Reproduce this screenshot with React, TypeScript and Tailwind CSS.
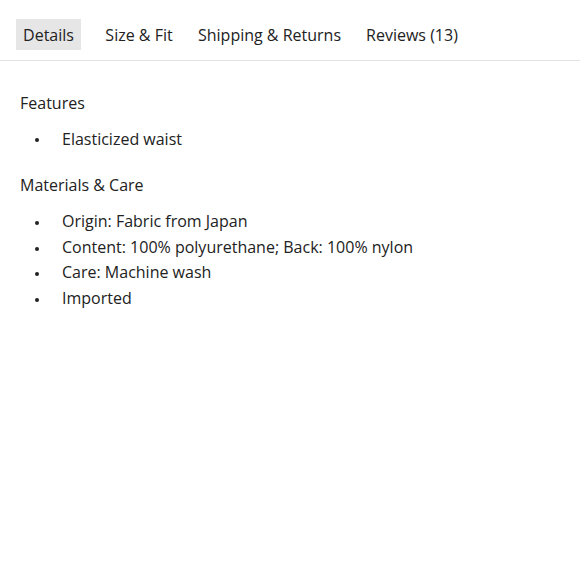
import React from "react";

const tabs = [
  { t: "Details", c: "w-[65px] bg-[#e6e6e6]" },
  { t: "Size & Fit", c: "w-[82px] ml-[6px]" },
  { t: "Shipping & Returns", c: "w-[157px]" },
  { t: "Reviews (13)", c: "w-[106px]" },
];

function Item({ children }: { children: React.ReactNode }) {
  return (
    <li className="flex items-center">
      <span className="w-[42px] flex pl-[15px]">
        <span className="block w-[4px] h-[4px] rounded-full bg-[#222] mt-[2px]" />
      </span>
      <span>{children}</span>
    </li>
  );
}

export default function App() {
  return (
    <div
      className="w-[580px] h-[580px] bg-white text-[#222]"
      style={{ fontFamily: "'Open Sans', 'Liberation Sans', sans-serif" }}
    >
      <div className="flex items-center gap-[11px] px-4 pt-[19px] pb-[10px] border-b border-[#e3e3e3]">
        {tabs.map(({ t, c }) => (
          <div
            key={t}
            className={`h-[31px] flex items-center justify-center whitespace-nowrap text-[16px] ${c}`}
          >
            {t}
          </div>
        ))}
      </div>
      <div className="px-5 pt-[30px] text-[16px]">
        <div className="leading-[24px]">Features</div>
        <ul className="mt-[11px] leading-[26px]">
          <Item>Elasticized waist</Item>
        </ul>
        <div className="mt-[21px] leading-[24px]">Materials &amp; Care</div>
        <ul className="mt-[12px] leading-[25.7px]">
          <Item>Origin: Fabric from Japan</Item>
          <Item>Content: 100% polyurethane; Back: 100% nylon</Item>
          <Item>Care: Machine wash</Item>
          <Item>Imported</Item>
        </ul>
      </div>
    </div>
  );
}
